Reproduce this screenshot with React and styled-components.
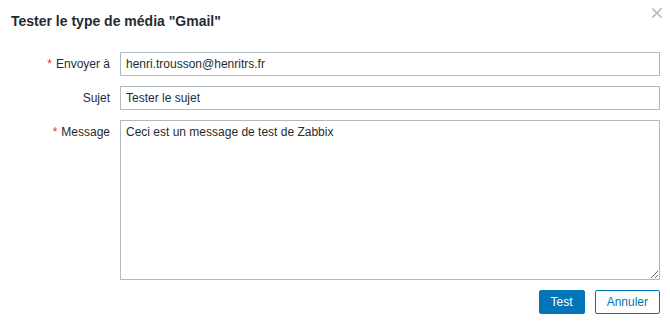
import styled, { createGlobalStyle } from "styled-components";

const GlobalStyle = createGlobalStyle`
	html, body {
		margin: 0;
		padding: 0;
		background: #ffffff;
	}
	body {
		font-family: "Liberation Sans", Arial, sans-serif;
		font-size: 12px;
		color: #1f2c33;
	}
`;

const Dialog = styled.div`
	width: 670px;
	height: 323px;
	background: #ffffff;
	box-sizing: border-box;
`;

const Header = styled.div`
	display: flex;
	justify-content: space-between;
	align-items: flex-start;
	height: 52px;
	padding: 0 8px 0 11px;
	box-sizing: border-box;
`;

const Title = styled.h4`
	margin: 12px 0 0;
	font-size: 14px;
	line-height: 18px;
	font-weight: bold;
	color: #1f2c33;
`;

const CloseButton = styled.button`
	margin-top: 8px;
	width: 10px;
	height: 10px;
	padding: 0;
	border: 0;
	background: transparent;
	display: flex;
	cursor: pointer;
`;

const FormGrid = styled.form`
	display: grid;
	grid-template-columns: 110px 540px;
	column-gap: 10px;
	row-gap: 10px;
	margin: 0;
`;

const Label = styled.label`
	display: flex;
	justify-content: flex-end;
	align-items: ${(p) => (p.$top ? "flex-start" : "center")};
	line-height: 24px;
	height: 24px;
	white-space: nowrap;
	color: #1f2c33;
`;

const Asterisk = styled.span`
	color: #e33734;
	margin-right: 4px;
`;

const TextInput = styled.input`
	box-sizing: border-box;
	width: 540px;
	height: 24px;
	margin: 0;
	padding: 0 5px;
	border: 1px solid #acbbc2;
	border-radius: 0;
	font-family: "Liberation Sans", Arial, sans-serif;
	font-size: 12px;
	color: #1f2c33;
	background: #ffffff;
	outline: none;
`;

const TextArea = styled.textarea`
	box-sizing: border-box;
	width: 540px;
	height: 160px;
	margin: 0;
	padding: 4px 5px;
	border: 1px solid #acbbc2;
	border-radius: 0;
	font-family: "Liberation Sans", Arial, sans-serif;
	font-size: 12px;
	line-height: 14px;
	color: #1f2c33;
	background: #ffffff;
	resize: vertical;
	outline: none;
	display: block;
`;

const Footer = styled.div`
	display: flex;
	justify-content: flex-end;
	gap: 10px;
	padding: 10px 10px 0;
`;

const Button = styled.button`
	box-sizing: border-box;
	height: 24px;
	padding: 0 11px;
	border: 1px solid #0275b8;
	border-radius: 2px;
	font-family: "Liberation Sans", Arial, sans-serif;
	font-size: 12px;
	line-height: 22px;
	cursor: pointer;
	background: ${(p) => (p.$secondary ? "#ffffff" : "#0275b8")};
	color: ${(p) => (p.$secondary ? "#0275b8" : "#ffffff")};
`;

const CloseIcon = () => (
	<svg width="10" height="10" viewBox="0 0 10 10">
		<path
			d="M1 1 L9 9 M9 1 L1 9"
			stroke="#a9bac4"
			strokeWidth="1.6"
			strokeLinecap="square"
		/>
	</svg>
);

export default function App() {
	return (
		<>
			<GlobalStyle />
			<Dialog>
				<Header>
					<Title>Tester le type de média "Gmail"</Title>
					<CloseButton type="button" title="Fermer">
						<CloseIcon />
					</CloseButton>
				</Header>
				<FormGrid onSubmit={(e) => e.preventDefault()}>
					<Label htmlFor="sendto">
						<Asterisk>*</Asterisk>Envoyer à
					</Label>
					<TextInput
						id="sendto"
						type="text"
						defaultValue="henri.trousson@henritrs.fr"
					/>

					<Label htmlFor="subject">Sujet</Label>
					<TextInput id="subject" type="text" defaultValue="Tester le sujet" />

					<Label htmlFor="message" $top>
						<Asterisk>*</Asterisk>Message
					</Label>
					<TextArea
						id="message"
						defaultValue="Ceci est un message de test de Zabbix"
					/>
				</FormGrid>
				<Footer>
					<Button type="button">Test</Button>
					<Button type="button" $secondary>
						Annuler
					</Button>
				</Footer>
			</Dialog>
		</>
	);
}
